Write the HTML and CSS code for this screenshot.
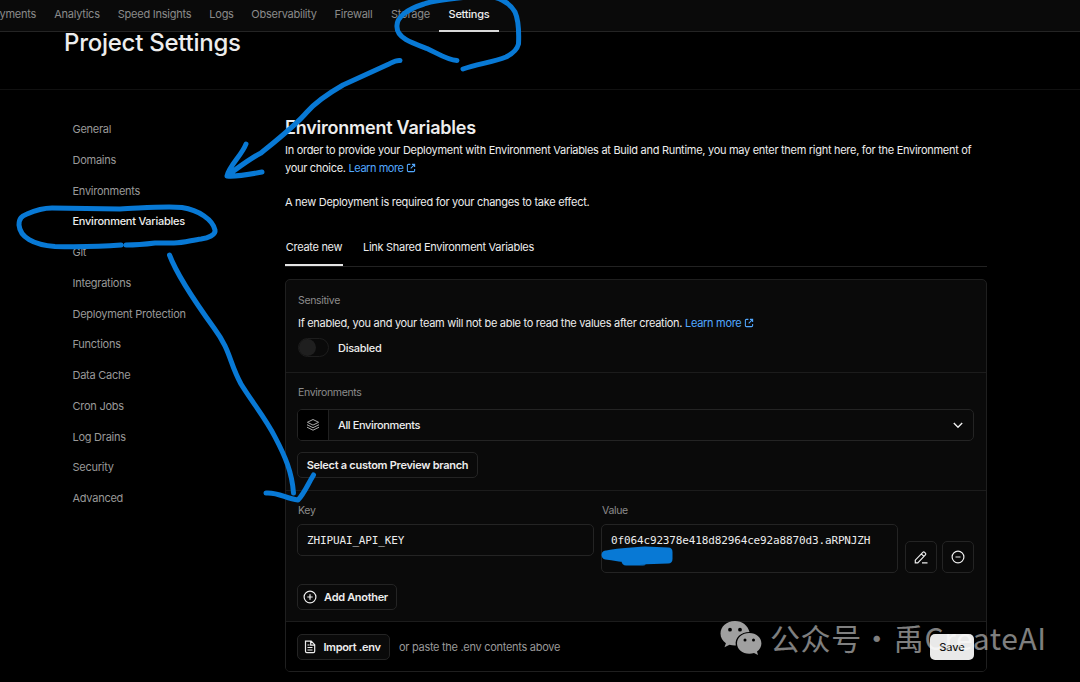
FILE: index.html
```html
<!DOCTYPE html>
<html lang="en">
<head>
<meta charset="utf-8">
<title>Project Settings</title>
<link rel="stylesheet" href="styles.css">
</head>
<body>
<svg class="defs" width="0" height="0">
  <symbol id="external" viewBox="0 0 16 16"><path d="M7 2.2H4A1.8 1.8 0 0 0 2.200 4v8A1.800 1.800 0 0 0 4 13.800h8a1.800 1.800 0 0 0 1.800-1.800V9.500M9.500 2.200h4.300v4.300M13.500 2.500 7.500 8.500" fill="none" stroke="currentColor" stroke-width="1.700"/></symbol>
</svg>
<div class="page">
  <nav class="topnav">
    <a class="nav-deploy">Deployments</a>
    <a class="nav-analytics">Analytics</a>
    <a class="nav-speed">Speed Insights</a>
    <a class="nav-logs">Logs</a>
    <a class="nav-obs">Observability</a>
    <a class="nav-fire">Firewall</a>
    <a class="nav-storage">Storage</a>
    <a class="nav-settings active">Settings</a>
  </nav>
  <header class="title-bar"><h1>Project Settings</h1></header>
  <div class="body">
    <aside class="sidebar">
      <a>General</a><a>Domains</a><a>Environments</a><a class="current">Environment Variables</a><a>Git</a><a>Integrations</a><a>Deployment Protection</a><a>Functions</a><a>Data Cache</a><a>Cron Jobs</a><a>Log Drains</a><a>Security</a><a>Advanced</a>
    </aside>
    <main class="content">
      <h2>Environment Variables</h2>
      <p class="intro"><span class="line-one">In order to provide your Deployment with Environment Variables at Build and Runtime, you may enter them right here, for the Environment of</span><br>your choice. <a class="link">Learn more <svg><use href="#external"/></svg></a></p>
      <p class="notice">A new Deployment is required for your changes to take effect.</p>
      <div class="tabs"><a class="tab selected">Create new</a><a class="tab shared">Link Shared Environment Variables</a></div>
      <div class="card">
        <section class="sensitive">
          <div class="label">Sensitive</div>
          <p class="help">If enabled, you and your team will not be able to read the values after creation. <a class="link">Learn more <svg><use href="#external"/></svg></a></p>
          <div class="toggle-row"><span class="toggle"><i></i></span><span>Disabled</span></div>
        </section>
        <section class="environments">
          <div class="label">Environments</div>
          <div class="select">
            <span class="select-icon"><svg width="14" height="14" viewBox="0 0 14 14" fill="none" stroke="currentColor" stroke-width="1"><path d="M7 1.500 12.600 4.300 7 7.100 1.400 4.300ZM1 6.700 7 9.700l6-3M1 9.200l6 3 6-3"/></svg></span>
            <span class="select-text">All Environments</span>
            <svg class="chevron" width="10" height="7" viewBox="0 0 10 7" fill="none" stroke="currentColor" stroke-width="1.400"><path d="m.8 1 4.200 4.200L9.200 1"/></svg>
          </div>
          <button class="btn branch">Select a custom Preview branch</button>
        </section>
        <section class="variables">
          <div class="fields">
            <div class="field"><div class="label">Key</div><div class="input">ZHIPUAI_API_KEY</div></div>
            <div class="field"><div class="label">Value</div><div class="input tall">0f064c92378e418d82964ce92a8870d3.aRPNJZH</div></div>
            <div class="actions">
              <button class="icon-btn"><svg width="14" height="14" viewBox="0 0 14 14" fill="none" stroke="currentColor" stroke-width="1.200"><path d="M1.300 12.800V10.200L8.800 2.300q.9-.9 1.800 0l.8.800q.9.900 0 1.800L3.800 12.800ZM7.300 3.800l2.600 2.600M8 12.800h5.500"/></svg></button>
              <button class="icon-btn"><svg width="14" height="14" viewBox="0 0 14 14" fill="none" stroke="currentColor" stroke-width="1.200"><circle cx="7" cy="7" r="5.900"/><path d="M4.500 7h5"/></svg></button>
            </div>
          </div>
          <button class="btn add"><svg width="14" height="14" viewBox="0 0 14 14" fill="none" stroke="currentColor" stroke-width="1.200"><circle cx="7" cy="7" r="5.900"/><path d="M4.300 7h5.400M7 4.300v5.400"/></svg><span>Add Another</span></button>
        </section>
        <footer class="card-footer">
          <button class="btn import"><svg width="12" height="14" viewBox="0 0 12 14" fill="none" stroke="currentColor" stroke-width="1.200"><path d="M1.500 1.200h5.700l3.500 3.500v6.600q0 1.300-1.300 1.300H2.800q-1.300 0-1.300-1.300ZM6.700 1.200v4h4M3.500 5h2M3.500 7.500h5M3.500 10h5"/></svg><span>Import .env</span></button>
          <span class="hint">or paste the .env contents above</span>
          <button class="btn save">Save</button>
        </footer>
      </div>
    </main>
  </div>

  <div class="watermark">
    <svg width="42" height="34" viewBox="0 0 42 34"><path fill="#a0a0a0" fill-rule="evenodd" d="M15 0C6.500 0 .5 5.700.5 12.500c0 4 2.100 7.400 5.400 9.700L4.500 26.300l5-2.600c2 .6 4 .9 6.300.8C14.500 16.500 21 11 29.500 11 28 4.500 22.200 0 15 0ZM10 6.800a1.900 1.900 0 1 1 0 3.800 1.900 1.900 0 0 1 0-3.800ZM20 6.800a1.900 1.900 0 1 1 0 3.800 1.900 1.900 0 0 1 0-3.800Z"/><path fill="#a0a0a0" fill-rule="evenodd" d="M29.300 12C22.300 12 17 16.700 17 22.400s5.300 10.300 12.300 10.300c1.700 0 3.300-.3 4.700-.8l4 2-1-3.500c2.700-1.900 4.400-4.800 4.400-8C41.400 16.700 36.200 12 29.300 12ZM25 17.500a1.500 1.500 0 1 1 0 3 1.500 1.500 0 0 1 0-3ZM33.500 17.500a1.500 1.500 0 1 1 0 3 1.500 1.500 0 0 1 0-3Z"/></svg>
    <span class="wm-cn">公众号</span><span class="wm-dot">·</span><span class="wm-name">禹CreateAI</span>
  </div>

  <svg class="ink" width="1080" height="682" viewBox="0 0 1080 682">
    <path d="M457 60.500C447 60 437 53 427 48.500C412 43 397 38 397 27C396 17 408 9 424 4C438-1 458-2 480-4C498-5 510 3 515 12C519 21 519 33 518.500 44C517 50 512 54 506 57C493 62 478 64 463 69"/>
    <path d="M400 60.500C396 60 393 62 389 64L343 85C324 96 314 104 307 112C295 126 277 140 261 153C249 159 238 168 228 175M246 144C242 155 229 166 227 176C237 177 252 174 262 172"/>
    <path d="M121 245C96 247 77 247 55 246.500C33 245 20 237 19 225C19 218 22 216 27 214C36 210 44 208 52 208L120 209C144 208 165 206 182 207.500C199 210 213 220 215 230C216 235 208 238 201 239C192 240 184 243 174 243H155C147 244 138 245 126 245"/>
    <path d="M169.500 255C177 275 193 299 214 328C231 351 229 362 241 384C252 402 266 419 275 437C285 456 292 472 293.500 493M266 493C279 492 286 499 298 500C304 494 308 484 313.500 475"/>
    <path class="scribble" d="M606 555C618 552 632 552 645 551L668 552V559L639 560C628 558 619 557 606 555M626 561H643"/>
  </svg>
</div>
</body>
</html>
```
FILE: styles.css
```css
* { box-sizing: border-box; }
body { margin: 0; background: #000; color: #ededed; font-family: Inter, "Liberation Sans", sans-serif; font-size: 11px; letter-spacing: -.290px; }
h1, h2, p { margin: 0; }
.defs { position: absolute; }
.page { position: relative; width: 1080px; height: 682px; overflow: hidden; }

.topnav { display: flex; height: 32px; background: #0a0a0a; border-bottom: 1px solid #242424; color: #8b8b8b; }
.topnav a { flex: none; text-align: center; line-height: 29px; height: 32px; white-space: nowrap; letter-spacing: -.250px; }
.topnav .nav-deploy { width: 45px; display: flex; justify-content: flex-end; padding-right: 9px; }
.nav-analytics { width: 64px; }
.nav-speed { width: 91px; }
.nav-logs { width: 43px; }
.nav-obs { width: 82px; }
.nav-fire { width: 57px; }
.nav-storage { width: 57px; }
.nav-settings { width: 60px; }
.topnav .active { color: #ededed; font-weight: 500; border-bottom: 2px solid #d8d8d8; }

.title-bar { height: 58px; padding-left: 64px; border-bottom: 1px solid #111; }
h1 { font-size: 24px; line-height: 22px; font-weight: 500; letter-spacing: -.260px; }

.body { display: flex; }
.sidebar { width: 285px; padding: 24px 0 0 72.500px; display: flex; flex-direction: column; color: #999; letter-spacing: -.260px; }
.sidebar a { height: 30.770px; line-height: 31px; white-space: nowrap; }
.sidebar .current { color: #ededed; font-weight: 500; }

.content { width: 702px; padding-top: 26px; }
h2 { font-size: 18px; line-height: 24px; font-weight: 600; letter-spacing: -.230px; }
.intro { margin-top: 2px; line-height: 17.500px; white-space: nowrap; }
.intro .link { letter-spacing: -.450px; }
.link { color: #52a8ff; }
.link svg { width: 10px; height: 10px; vertical-align: -1px; }
.notice { margin-top: 16px; line-height: 18px; }

.tabs { display: flex; gap: 20px; margin-top: 18px; height: 38px; border-bottom: 1px solid #222; }
.tab { height: 37px; line-height: 37px; white-space: nowrap; }
.tab.selected { width: 58px; text-align: center; border-bottom: 2px solid #e4e4e4; }

.card { margin-top: 12px; height: 393px; border: 1px solid #1f1f1f; border-radius: 5px; background: #0a0a0a; overflow: hidden; }
.card section { padding: 0 11px; border-bottom: 1px solid #1c1c1c; }
.label { padding-left: 1px; color: #8c8c8c; font-size: 10.500px; line-height: 14px; letter-spacing: -.330px; }
.card .sensitive { height: 93px; padding-top: 14px; }
.help { padding-left: 1px; margin-top: 6px; line-height: 18px; white-space: nowrap; }
.toggle-row { display: flex; align-items: center; gap: 9px; margin-top: 6px; padding-left: 1px; font-weight: 500; }
.toggle { width: 31px; height: 19px; border: 1px solid #1d1d1d; border-radius: 10px; }
.toggle i { display: block; width: 17px; height: 17px; border-radius: 50%; background: #1f1f1f; }

.card .environments { height: 118px; padding-top: 13px; }
.select { display: flex; align-items: center; margin-top: 9px; width: 677px; height: 32px; border: 1px solid #242424; border-radius: 5px; overflow: hidden; font-weight: 500; }
.select-icon { display: flex; align-items: center; justify-content: center; width: 31px; height: 30px; background: #000; border-right: 1px solid #202020; color: #aaa; }
.select-text { margin-left: 9px; letter-spacing: -.380px; }
.chevron { margin: 0 10px 0 auto; }

.btn { display: flex; align-items: center; justify-content: center; padding: 0; height: 26px; border: 1px solid #242424; border-radius: 5px; background: #0a0a0a; color: #ededed; font: 600 11px Inter, sans-serif; letter-spacing: -.320px; white-space: nowrap; }
.branch { width: 181px; margin-top: 11px; letter-spacing: -.280px; }

.card .variables { height: 131px; padding-top: 13px; }
.fields { display: flex; }
.field { width: 297px; margin-right: 7px; }
.input { height: 32px; margin-top: 6px; padding: 8px 9px; border: 1px solid #242424; border-radius: 5px; font: 11px/16px "DejaVu Sans Mono", monospace; letter-spacing: -.140px; white-space: nowrap; }
.tall { height: 49px; }
.actions { display: flex; gap: 5px; margin-top: 37px; }
.icon-btn { display: flex; align-items: center; justify-content: center; width: 32px; height: 32px; padding: 0; border: 1px solid #242424; border-radius: 5px; background: #0a0a0a; color: #ededed; }
.add { width: 100px; margin-top: 11px; padding-right: 3px; gap: 7px; }

.card-footer { display: flex; align-items: center; height: 49px; padding: 0 12px 0 11px; background: #000; }
.import { width: 93px; padding-right: 2px; gap: 7px; }
.hint { margin-left: 9px; color: #999; }
.save { width: 44px; margin-left: auto; border: 0; background: #e9e9e9; color: #111; font-weight: 500; letter-spacing: -.1px; }

.watermark { position: absolute; left: 720px; top: 621px; display: flex; color: rgba(255, 255, 255, .5); font: 400 30px/34px "Noto Sans CJK SC", sans-serif; white-space: nowrap; letter-spacing: .600px; }
.watermark span { margin-top: -1px; }
.watermark .wm-cn { margin-left: 8px; }
.wm-dot { width: 30px; text-align: center; }
.watermark .wm-name { margin-left: 2px; }
.ink { position: absolute; left: 0; top: 0; fill: none; stroke: #0879d5; stroke-width: 5; stroke-linecap: round; stroke-linejoin: round; }
.ink .scribble { stroke-width: 9; }
```
